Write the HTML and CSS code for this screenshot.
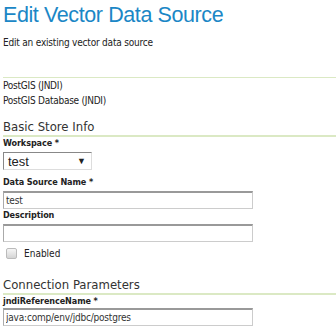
FILE: index.html
```html
<!DOCTYPE html>
<html lang="en">
  <head>
    <meta charset="UTF-8" />
    <title>Edit Vector Data Source</title>
    <link rel="stylesheet" href="styles.css">
  </head>

  <body>
    <div class="page-header">
      <h1>Edit Vector Data Source</h1>
      <p class="page-description">Edit an existing vector data source</p>
    </div>

    <div class="store-type">
      <div>PostGIS (JNDI)</div>
      <div>PostGIS Database (JNDI)</div>
    </div>

    <h2>Basic Store Info</h2>
    <ul class="fields">
      <li>
        <label>Workspace *</label>
        <div class="select-box">
          <span>test</span>
          <span class="arrow">&#9660;</span>
        </div>
      </li>
      <li>
        <label>Data Source Name *</label>
        <input class="field" type="text" value="test">
      </li>
      <li>
        <label>Description</label>
        <input class="field" type="text" value="">
      </li>
      <li class="check-row">
        <span class="checkbox"></span>
        <span>Enabled</span>
      </li>
    </ul>

    <h2 class="conn-title">Connection Parameters</h2>
    <ul class="fields">
      <li>
        <label>jndiReferenceName *</label>
        <input class="field" type="text" value="java:comp/env/jdbc/postgres">
      </li>
    </ul>
  </body>
</html>
```

FILE: styles.css
```css
body {
  margin: 0;
  padding: 0 0 0 3px;
  font-family: "DejaVu Sans Condensed", "Liberation Sans", sans-serif;
  font-size: 10px;
  color: #222;
  background: white;
}

h1 {
  margin: 2px 0 0;
  font-family: "Liberation Sans", Arial, sans-serif;
  font-weight: normal;
  font-size: 21.5px;
  letter-spacing: -0.4px;
  color: #1b87c6;
  line-height: 26px;
}

.page-description {
  margin: 8px 0 0;
  line-height: 13px;
  letter-spacing: -0.2px;
}

.store-type {
  margin-top: 28px;
  border-top: 1px solid #dbe9c4;
  line-height: 15px;
  letter-spacing: -0.25px;
}

h2 {
  margin: 11px 0 0;
  font-weight: normal;
  font-size: 13px;
  color: #333;
  line-height: 16px;
  border-bottom: 2px solid #dbe9c4;
}

.conn-title {
  margin-top: 17px;
}

.fields {
  list-style: none;
  margin: 0;
  padding: 0;
}

.fields label {
  display: block;
  font-weight: bold;
  font-size: 9px;
  line-height: 13px;
  letter-spacing: -0.1px;
}

.select-box {
  box-sizing: border-box;
  margin: 2px 0 6px;
  width: 89px;
  height: 18px;
  padding: 0 5px 0 4px;
  display: flex;
  align-items: center;
  justify-content: space-between;
  border: 1px solid #888;
  border-right-color: #ddd;
  border-bottom-color: #ddd;
  font-family: "Liberation Sans", Arial, sans-serif;
  font-size: 13px;
}

.arrow {
  font-size: 9px;
}

.field {
  display: block;
  box-sizing: border-box;
  width: 250px;
  height: 18px;
  margin: 0;
  padding: 0 2px;
  border: 1px solid #ccc;
  border-top: 2px solid #999;
  border-left-color: #aaa;
  font-family: "DejaVu Sans Condensed", "Liberation Sans", sans-serif;
  font-size: 10px;
  letter-spacing: -0.2px;
  color: #333;
}

li + li > .field {
  margin-top: 2px;
}

.check-row {
  display: flex;
  align-items: center;
  gap: 7px;
  margin-top: 5px;
  padding-left: 3px;
  line-height: 13px;
}

.checkbox {
  box-sizing: border-box;
  width: 11px;
  height: 11px;
  border: 1px solid #bbb;
  border-radius: 2px;
  background: linear-gradient(#f6f6f6, #d4d4d4);
}
```
